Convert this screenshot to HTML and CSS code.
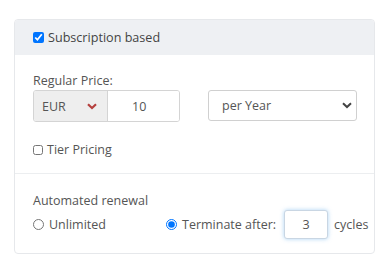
FILE: index.html
```html
<!DOCTYPE html>
<html>
<head>
<meta charset="utf-8">
<link rel="stylesheet" href="styles.css">
</head>
<body>
<div class="card">
  <div class="card-header">
    <label class="check"><input type="checkbox" checked> <span>Subscription based</span></label>
  </div>
  <div class="section">
    <div class="label">Regular Price:</div>
    <div class="price-row">
      <div class="input-group">
        <div class="select-wrap currency">
          <select class="addon"><option>EUR</option></select>
          <svg class="chev" width="10" height="7" viewBox="0 0 10 7"><path d="M1 1.2 L5 5 L9 1.2" fill="none" stroke="#b5403e" stroke-width="2.2"/></svg>
        </div>
        <input class="num" type="text" value="10">
      </div>
      <div class="select-wrap period">
        <select class="plain"><option>per Year</option></select>
        <svg class="chev" width="10" height="7" viewBox="0 0 10 7"><path d="M1 1.2 L5 5 L9 1.2" fill="none" stroke="#444" stroke-width="2"/></svg>
      </div>
    </div>
    <label class="check tier"><input type="checkbox"> <span>Tier Pricing</span></label>
  </div>
  <div class="section renew">
    <div class="label">Automated renewal</div>
    <div class="radio-row">
      <label class="radio unl"><input type="radio" name="r"> <span>Unlimited</span></label>
      <label class="radio term"><input type="radio" name="r" checked> <span>Terminate after:</span></label>
      <input class="cycles" type="text" value="3">
      <span class="suffix">cycles</span>
    </div>
  </div>
</div>
</body>
</html>
```

FILE: styles.css
```css
html, body {
  margin: 0;
  padding: 0;
  background: #ffffff;
}
body {
  font-family: "Open Sans", "DejaVu Sans", sans-serif;
  font-size: 12.5px;
  color: #555;
  padding: 19px 10px 0 14px;
}
.card {
  width: 359px;
  border: 1px solid #e6e8eb;
  border-radius: 4px;
  overflow: hidden;
}
.card-header {
  background: #eef0f3;
  height: 35px;
  display: flex;
  align-items: center;
  padding-left: 18px;
}
.check {
  display: flex;
  align-items: center;
  gap: 4px;
  white-space: nowrap;
}
.check input {
  margin: 0;
  width: 11px;
  height: 11px;
}
.card-header .check span {
  font-size: 12.6px;
  color: #444;
}
.section {
  padding: 17px 17px 14px 18px;
}
.label {
  line-height: 18px;
  color: #555;
}
.price-row {
  display: grid;
  grid-template-columns: 147px 149px;
  column-gap: 28px;
}
.input-group {
  display: flex;
  height: 32px;
  border: 1px solid #d4d4d4;
  border-radius: 3px;
  overflow: hidden;
  box-sizing: border-box;
}
.select-wrap {
  position: relative;
}
.select-wrap select {
  appearance: none;
  -webkit-appearance: none;
  font-family: inherit;
  font-size: 12.5px;
  color: #555;
  margin: 0;
  outline: none;
}
.currency {
  width: 73px;
  border-right: 1px solid #d4d4d4;
}
.addon {
  width: 100%;
  height: 100%;
  border: none;
  background: #eeeeee;
  padding-left: 8px;
}
.currency .chev {
  position: absolute;
  right: 10px;
  top: 12px;
}
.num {
  flex: 1;
  min-width: 0;
  border: none;
  outline: none;
  font-family: inherit;
  font-size: 12.5px;
  color: #555;
  padding: 0 0 0 24px;
  margin: 0;
}
.period {
  height: 31px;
}
.plain {
  width: 100%;
  height: 31px;
  border: 1px solid #d0d0d0;
  border-radius: 3px;
  background: #fff;
  padding-left: 13px;
}
.period .chev {
  position: absolute;
  right: 5px;
  top: 12px;
}
.tier {
  margin-top: 19px;
  line-height: 18px;
}
.tier input {
  width: 10px;
  height: 10px;
}
.renew {
  border-top: 1px solid #eceef0;
  padding-top: 18px;
  padding-bottom: 14px;
}
.radio-row {
  display: flex;
  align-items: center;
  height: 29px;
  white-space: nowrap;
}
.radio {
  display: flex;
  align-items: center;
  gap: 5px;
  flex: none;
}
.radio input {
  margin: 0;
  width: 11px;
  height: 11px;
}
.unl {
  width: 133px;
}
.cycles {
  flex: none;
  width: 44px;
  height: 29px;
  box-sizing: border-box;
  margin: 0 0 0 8px;
  border: 1px solid #c9d6e3;
  border-radius: 3px;
  box-shadow: 0 0 4px rgba(102, 175, 233, 0.55);
  outline: none;
  text-align: center;
  font-family: inherit;
  font-size: 12.5px;
  color: #555;
}
.suffix {
  margin-left: 6px;
}
```
